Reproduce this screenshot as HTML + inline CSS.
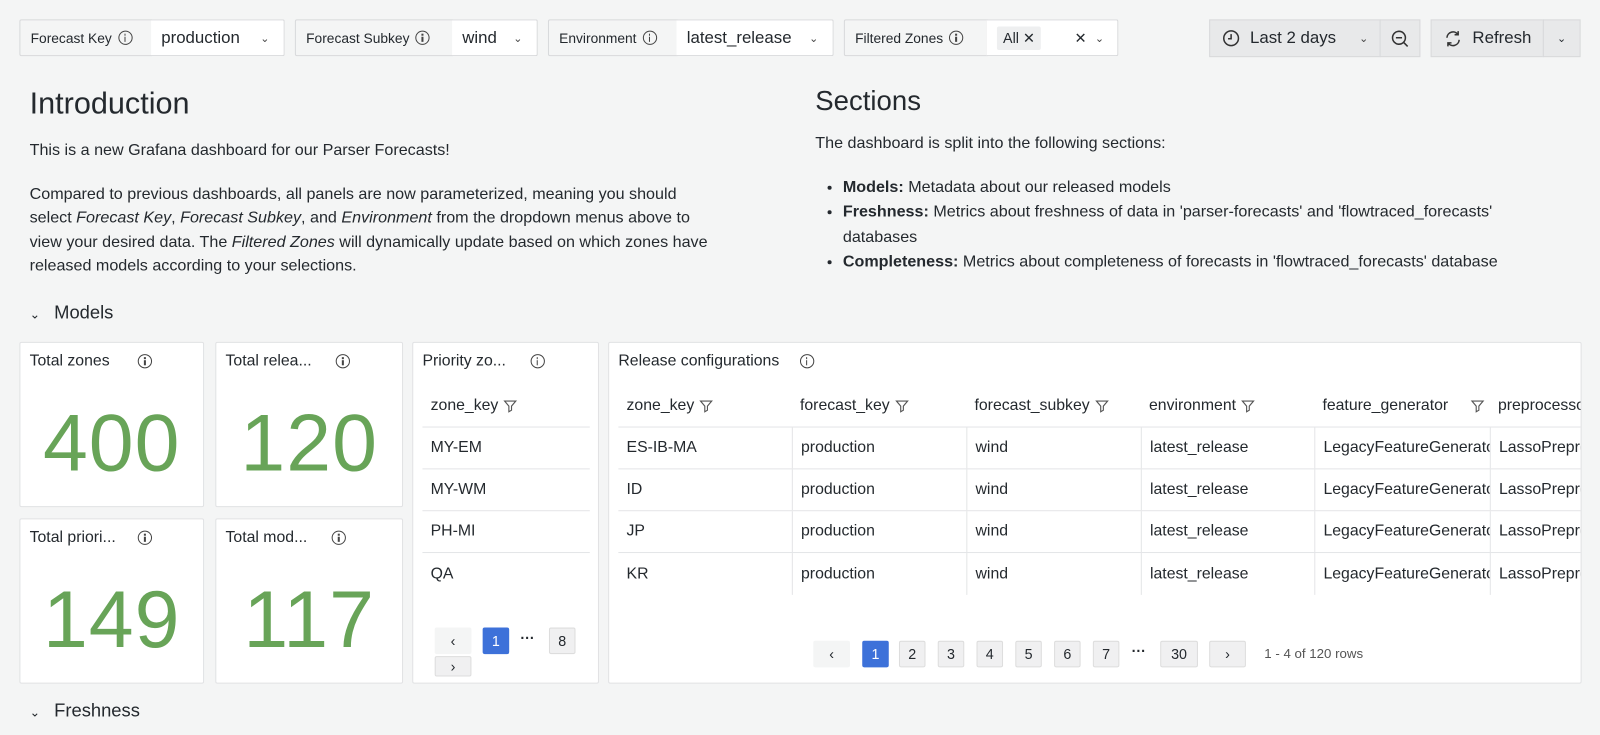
<!DOCTYPE html>
<html><head><style>
*{box-sizing:border-box;margin:0;padding:0}
body{width:1600px;height:734px;overflow:hidden;background:#f4f5f5;font-family:"Liberation Sans",sans-serif;color:#24292e;position:relative}
#w{position:absolute;left:0;top:0;width:1568px;height:720px;transform:scale(1.0204);transform-origin:0 0}
.a{position:absolute}
.lbl{position:absolute;height:36px;top:19px;background:#f4f5f5;border:1px solid #d8d9db;border-radius:2px 0 0 2px;font-size:13.5px;display:flex;align-items:center;padding-left:10px}
.val{position:absolute;height:36px;top:19px;background:#fff;border:1px solid #d8d9db;border-left:none;border-radius:0 2px 2px 0;font-size:16.5px;display:flex;align-items:center;padding-left:10px}
.i{display:inline-block;width:14px;height:14px;border:1.3px solid #444;border-radius:50%;margin-left:6px;position:relative}
.i:before{content:"";position:absolute;left:5px;top:5px;width:1.4px;height:5px;background:#444}
.i:after{content:"";position:absolute;left:5px;top:2px;width:1.4px;height:1.6px;background:#444}
.chev{position:absolute;font-size:11px;color:#444}
.btn{position:absolute;top:19px;height:37px;background:#e8e9ea;border:1px solid #d8d9db;display:flex;align-items:center;font-size:16.5px}
.panel{position:absolute;background:#fff;border:1px solid #e1e2e4;border-radius:2px}
.pt{position:absolute;left:9px;top:9px;font-size:15.5px;display:flex;align-items:center}
.big{position:absolute;left:0;right:0;text-align:center;color:#68a458;font-size:79px;top:52px;letter-spacing:1px}
p{font-size:15.8px;line-height:23.5px}
.row{position:absolute;left:9px;height:41px;border-bottom:1px solid #e4e5e7;font-size:15.5px;display:flex;align-items:center}
.c{position:absolute;top:0;height:100%;display:flex;align-items:center;padding-left:8px;overflow:hidden;white-space:nowrap;border-left:1px solid #e4e5e7}
.pg{position:absolute;top:0;width:26px;height:26px;border-radius:2px;background:#f0f0f1;border:1px solid #ddd;font-size:14px;display:flex;align-items:center;justify-content:center}
.f{display:inline-block;margin-left:5px;width:14px;height:14px}
</style></head><body><div id="w">
<div class="lbl" style="left:19px;width:130px">Forecast Key<span class="i"></span></div>
<div class="val" style="left:148px;width:131px">production<span class="chev" style="left:107px">&#8964;</span></div>
<div class="lbl" style="left:289px;width:155px">Forecast Subkey<span class="i"></span></div>
<div class="val" style="left:443px;width:84px">wind<span class="chev" style="left:60px">&#8964;</span></div>
<div class="lbl" style="left:537px;width:127px">Environment<span class="i"></span></div>
<div class="val" style="left:663px;width:154px">latest_release<span class="chev" style="left:130px">&#8964;</span></div>
<div class="lbl" style="left:827px;width:141px">Filtered Zones<span class="i"></span></div>
<div class="val" style="left:967px;width:129px;font-size:14px"><span style="background:#eeeff0;padding:3px 6px;border-radius:2px">All ✕</span><span class="a" style="left:86px;font-size:14px">✕</span><span class="chev" style="left:106px">&#8964;</span></div>
<div class="btn" style="left:1185px;width:168px;padding-left:12px"><svg width="17" height="17" viewBox="0 0 17 17" style="margin-right:10px"><circle cx="8.5" cy="8.5" r="7.2" fill="none" stroke="#333" stroke-width="1.5"/><path d="M8.5 4.5v4.5h-3" fill="none" stroke="#333" stroke-width="1.5"/></svg>Last 2 days<span class="chev" style="left:146px">&#8964;</span></div>
<div class="btn" style="left:1352px;width:40px;justify-content:center"><svg width="18" height="18" viewBox="0 0 18 18"><circle cx="8" cy="8" r="6.3" fill="none" stroke="#333" stroke-width="1.5"/><path d="M5 8h6M12.5 12.5l4 4" stroke="#333" stroke-width="1.5"/></svg></div>
<div class="btn" style="left:1402px;width:111px;padding-left:12px"><svg width="18" height="18" viewBox="0 0 18 18" style="margin-right:10px"><path d="M3 8a6 6 0 0 1 11-3M15 10a6 6 0 0 1-11 3M14 1.5V5h-3.5M4 16.5V13h3.5" fill="none" stroke="#333" stroke-width="1.5"/></svg>Refresh</div>
<div class="btn" style="left:1512px;width:37px;justify-content:center;font-size:11px">&#8964;</div>

<div class="a" style="left:29px;top:85px;font-size:30px">Introduction</div>
<div class="a" style="left:29px;top:136px;width:745px;height:136px;overflow:hidden">
<p>This is a new Grafana dashboard for our Parser Forecasts!</p>
<p style="margin-top:19px">Compared to previous dashboards, all panels are now parameterized, meaning you should<br>select <i>Forecast Key</i>, <i>Forecast Subkey</i>, and <i>Environment</i> from the dropdown menus above to<br>view your desired data. The <i>Filtered Zones</i> will dynamically update based on which zones have<br>released models according to your selections.</p></div>
<div class="a" style="left:799px;top:84px;font-size:27px">Sections</div>
<div class="a" style="left:799px;top:129px;width:760px">
<p>The dashboard is split into the following sections:</p>
<ul style="margin-top:19px;padding-left:27px;font-size:15.8px;line-height:24.5px;white-space:nowrap">
<li><b>Models:</b> Metadata about our released models</li>
<li><b>Freshness:</b> Metrics about freshness of data in 'parser-forecasts' and 'flowtraced_forecasts'<br>databases</li>
<li><b>Completeness:</b> Metrics about completeness of forecasts in 'flowtraced_forecasts' database</li></ul></div>

<div class="a" style="left:29px;top:296px;font-size:18px"><span style="font-size:12px;margin-right:14px">&#8964;</span>Models</div>
<div class="a" style="left:29px;top:686px;font-size:18px"><span style="font-size:12px;margin-right:14px">&#8964;</span>Freshness</div>

<div class="panel" style="left:19px;top:335px;width:181px;height:162px"><div class="pt">Total zones<span class="i" style="margin-left:28px"></span></div><div class="big">400</div></div>
<div class="panel" style="left:211px;top:335px;width:184px;height:162px"><div class="pt">Total relea...<span class="i" style="margin-left:24px"></span></div><div class="big">120</div></div>
<div class="panel" style="left:19px;top:508px;width:181px;height:162px"><div class="pt">Total priori...<span class="i" style="margin-left:22px"></span></div><div class="big">149</div></div>
<div class="panel" style="left:211px;top:508px;width:184px;height:162px"><div class="pt">Total mod...<span class="i" style="margin-left:24px"></span></div><div class="big">117</div></div>

<div class="panel" style="left:404px;top:335px;width:183px;height:335px"><div class="pt">Priority zo...<span class="i" style="margin-left:24px"></span></div>
<div class="row" style="top:42px;width:164px;padding-left:8px">zone_key<svg class="f" viewBox="0 0 14 14"><path d="M1.5 2h11l-4.2 5v4l-2.6 1.5V7z" fill="none" stroke="#555" stroke-width="1.1"/></svg></div>
<div class="row" style="top:83px;width:164px;padding-left:8px">MY-EM</div>
<div class="row" style="top:124px;width:164px;padding-left:8px">MY-WM</div>
<div class="row" style="top:165px;width:164px;padding-left:8px">PH-MI</div>
<div class="row" style="top:206px;width:164px;padding-left:8px;border:none">QA</div>
<div class="pg" style="left:21px;top:279px;width:36px;background:#f4f5f5;border:none">‹</div>
<div class="pg" style="left:68px;top:279px;background:#3d71d9;color:#fff;border:none">1</div>
<div class="a" style="left:105px;top:281px;font-size:14px;font-weight:bold">···</div>
<div class="pg" style="left:133px;top:279px">8</div>
<div class="pg" style="left:21px;top:307px;width:36px;height:20px">›</div>
</div>

<div class="panel" style="left:596px;top:335px;width:954px;height:335px;overflow:hidden"><div class="pt">Release configurations<span class="i" style="margin-left:20px"></span></div>
<div class="row" style="top:42px;width:945px">
<div class="c" style="left:0;border:none">zone_key<svg class="f" viewBox="0 0 14 14"><path d="M1.5 2h11l-4.2 5v4l-2.6 1.5V7z" fill="none" stroke="#555" stroke-width="1.1"/></svg></div>
<div class="c" style="left:170px;border:none">forecast_key<svg class="f" viewBox="0 0 14 14"><path d="M1.5 2h11l-4.2 5v4l-2.6 1.5V7z" fill="none" stroke="#555" stroke-width="1.1"/></svg></div>
<div class="c" style="left:341px;border:none">forecast_subkey<svg class="f" viewBox="0 0 14 14"><path d="M1.5 2h11l-4.2 5v4l-2.6 1.5V7z" fill="none" stroke="#555" stroke-width="1.1"/></svg></div>
<div class="c" style="left:512px;border:none">environment<svg class="f" viewBox="0 0 14 14"><path d="M1.5 2h11l-4.2 5v4l-2.6 1.5V7z" fill="none" stroke="#555" stroke-width="1.1"/></svg></div>
<div class="c" style="left:682px;border:none;width:172px">feature_generator<svg class="f" style="position:absolute;left:148px;background:#fff" viewBox="0 0 14 14"><path d="M1.5 2h11l-4.2 5v4l-2.6 1.5V7z" fill="none" stroke="#555" stroke-width="1.1"/></svg></div>
<div class="c" style="left:854px;border:none">preprocessor</div></div>
<div class="row" style="top:83px;width:945px"><div class="c" style="left:0;border:none">ES-IB-MA</div><div class="c" style="left:170px">production</div><div class="c" style="left:341px">wind</div><div class="c" style="left:512px">latest_release</div><div class="c" style="left:682px;width:172px">LegacyFeatureGenerator</div><div class="c" style="left:854px">LassoPreprocessor</div></div>
<div class="row" style="top:124px;width:945px"><div class="c" style="left:0;border:none">ID</div><div class="c" style="left:170px">production</div><div class="c" style="left:341px">wind</div><div class="c" style="left:512px">latest_release</div><div class="c" style="left:682px;width:172px">LegacyFeatureGenerator</div><div class="c" style="left:854px">LassoPreprocessor</div></div>
<div class="row" style="top:165px;width:945px"><div class="c" style="left:0;border:none">JP</div><div class="c" style="left:170px">production</div><div class="c" style="left:341px">wind</div><div class="c" style="left:512px">latest_release</div><div class="c" style="left:682px;width:172px">LegacyFeatureGenerator</div><div class="c" style="left:854px">LassoPreprocessor</div></div>
<div class="row" style="top:206px;width:945px;border:none"><div class="c" style="left:0;border:none">KR</div><div class="c" style="left:170px">production</div><div class="c" style="left:341px">wind</div><div class="c" style="left:512px">latest_release</div><div class="c" style="left:682px;width:172px">LegacyFeatureGenerator</div><div class="c" style="left:854px">LassoPreprocessor</div></div>
<div class="a" style="left:200px;top:292px;width:750px;height:28px">
<div class="pg" style="left:0;width:36px;background:#f4f5f5;border:none">‹</div>
<div class="pg" style="left:48px;background:#3d71d9;color:#fff;border:none">1</div>
<div class="pg" style="left:84px">2</div><div class="pg" style="left:122px">3</div><div class="pg" style="left:160px">4</div><div class="pg" style="left:198px">5</div><div class="pg" style="left:236px">6</div><div class="pg" style="left:274px">7</div>
<div class="a" style="left:312px;top:2px;font-size:14px;font-weight:bold">···</div>
<div class="pg" style="left:340px;width:37px">30</div>
<div class="pg" style="left:388px;width:36px">›</div>
<div class="a" style="left:442px;top:5px;font-size:13px;color:#555">1 - 4 of 120 rows</div>
</div>
</div>
</div></body></html>
